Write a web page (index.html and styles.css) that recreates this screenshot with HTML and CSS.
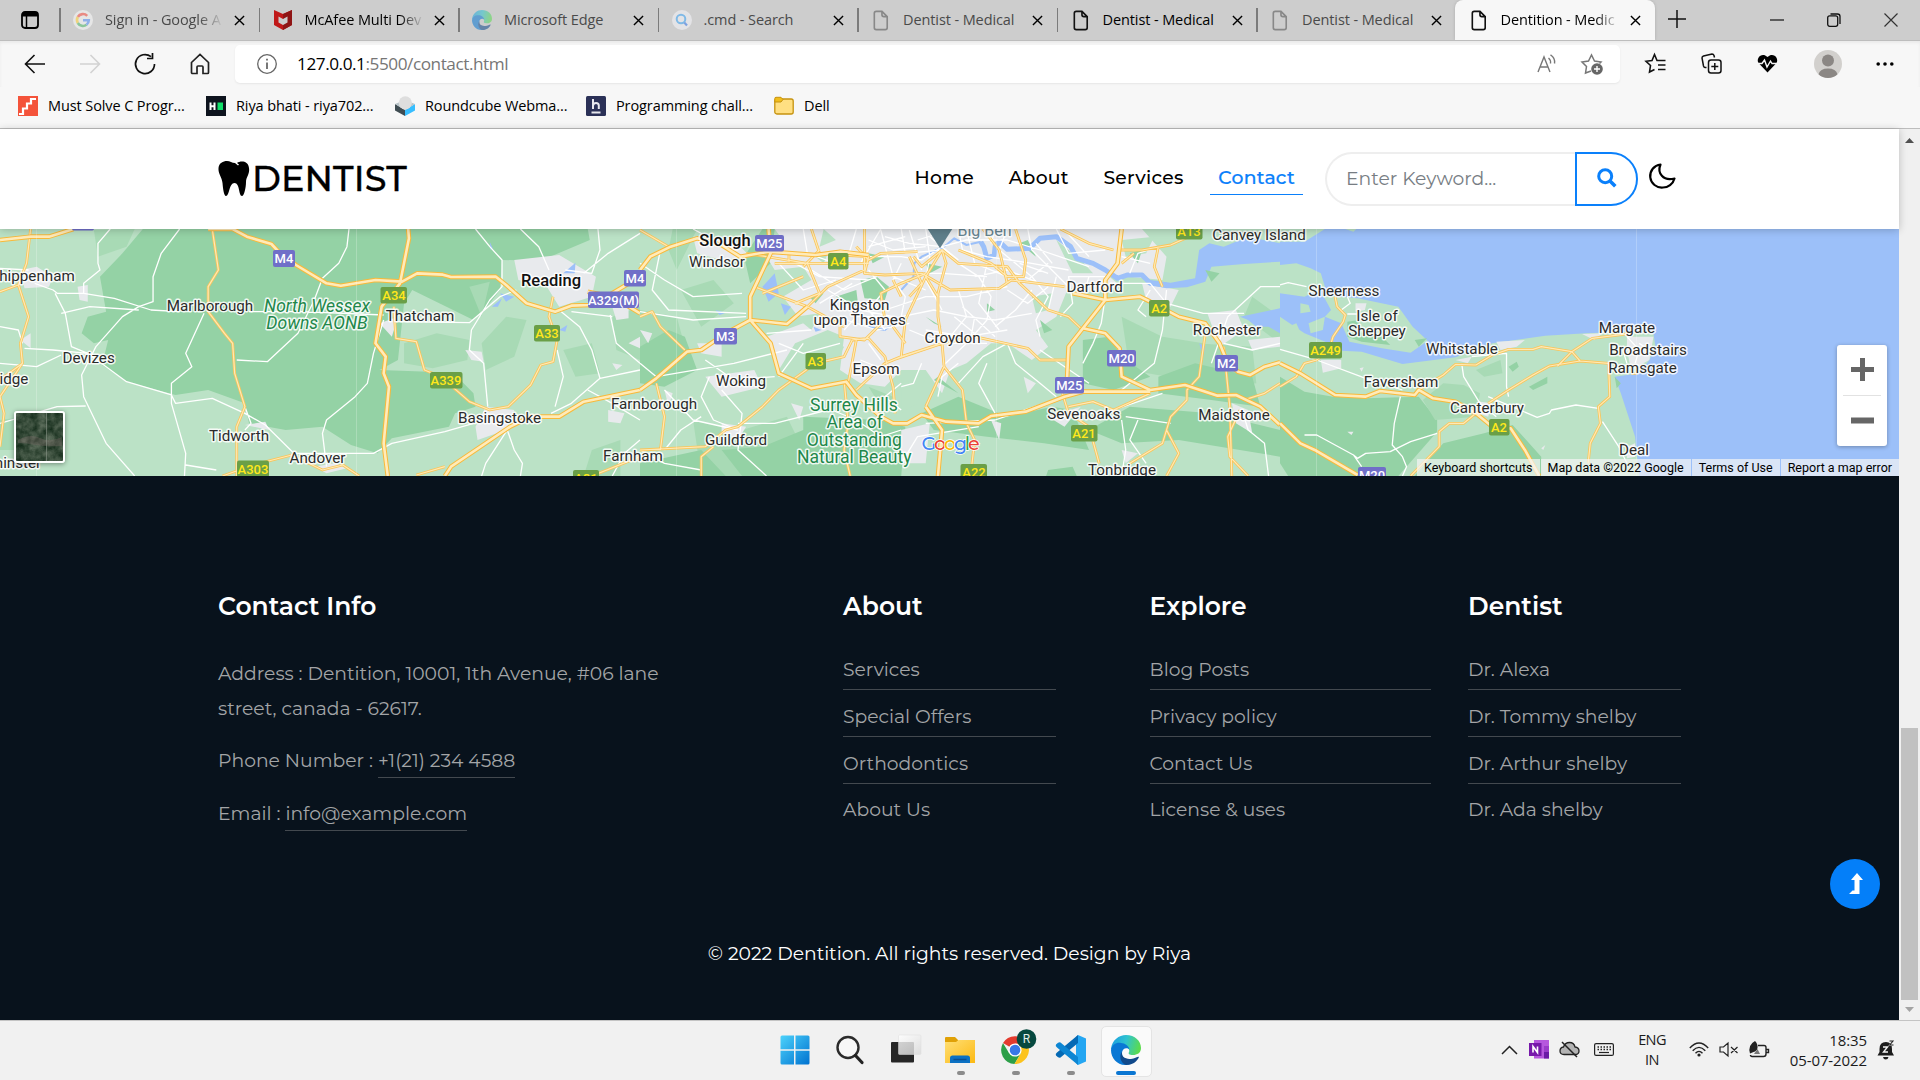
FILE: index.html
```html
<!DOCTYPE html>
<html lang="en">
<head>
<meta charset="utf-8">
<title>Dentition - Medical</title>
<link rel="stylesheet" href="styles.css">
</head>
<body>
<svg width="0" height="0" class="defs">
  <defs>
    <symbol id="page" viewBox="0 0 18 22"><path d="M2 3.500Q2 1.500 4 1.500H10L15.500 7V18.500Q15.500 20.500 13.500 20.500H4Q2 20.500 2 18.500ZM10 1.500V5Q10 7 12 7H15.500" fill="none" stroke="currentColor" stroke-width="1.700"/></symbol>
    <symbol id="x" viewBox="0 0 12 12"><path d="M1 1L11 11M11 1L1 11" fill="none" stroke="currentColor" stroke-width="1.500"/></symbol>
    <symbol id="edge" viewBox="0 0 30 30">
      <linearGradient id="eg" x1="0" x2="1" y1=".2" y2=".4"><stop offset="0" stop-color="#1b9de2"/><stop offset=".5" stop-color="#2fc3cf"/><stop offset="1" stop-color="#5bdb4e"/></linearGradient>
      <path d="M0 14C1 5 8 0 15 0C24 0 30 6 30 13C30 18 26 20 22 20C18 20 17 19 18 17C19 15 17 11 12 11C6 11 2 15 0 14Z" fill="url(#eg)"/>
      <path d="M0 15C1 9 6 7 10 8C14 8 18 11 18.500 14.500C16 12 11 13 11 18C11 24 17 29 22 27C19 30 16 30 14 30C6 30 0 23 0 15Z" fill="#0a78d4"/>
      <path d="M11 17C10 23 16 24 20 24C24 24 27 21 28 22C26 27 21 30 15 30C9 28 8 20 11 17Z" fill="#114a8b"/>
    </symbol>
  </defs>
</svg>

<div class="tabs">
  <div class="tabmenu"><svg width="18" height="18" viewBox="0 0 18 18"><rect x="1" y="1" width="16" height="16" rx="3" fill="none" stroke="#000" stroke-width="1.800"/><path d="M1 2H17V5.500H1Z"/><path d="M5.500 5V17" stroke="#000" stroke-width="1.500"/></svg></div>
  <div class="tab dim"><svg class="fav" viewBox="0 0 20 20"><circle cx="10" cy="10" r="10" fill="#e6e6e6"/><g fill="none" stroke-width="2.600"><path d="M14.200 5.800A6 6 0 0 0 4.800 7" stroke="#e98b84"/><path d="M4.800 7A6 6 0 0 0 4.800 13" stroke="#eed37c"/><path d="M4.800 13A6 6 0 0 0 13.500 14.800" stroke="#8cc69b"/><path d="M13.500 14.800A6 6 0 0 0 15.800 10.300H10" stroke="#8fb0ea"/></g></svg><span class="tt fade">Sign in - Google A</span><svg class="cl"><use href="#x"/></svg></div>
  <div class="tab"><svg class="fav" viewBox="0 0 20 20"><path d="M1 0L10 4L19 0V15L10 20L1 15Z" fill="#c01818"/><path d="M10 4L19 0V15L10 20Z" fill="#8f1515"/><path d="M5.500 6.500L10 9L14.500 6.500V12.500L10 15L5.500 12.500Z" fill="#cdcdcd"/></svg><span class="tt fade">McAfee Multi Dev</span><svg class="cl"><use href="#x"/></svg></div>
  <div class="tab dim"><svg class="fav half"><use href="#edge"/></svg><span class="tt">Microsoft Edge</span><svg class="cl"><use href="#x"/></svg></div>
  <div class="tab dim"><svg class="fav" viewBox="0 0 20 20"><circle cx="10" cy="10" r="10" fill="#e3e3e6"/><circle cx="9" cy="9" r="4.300" fill="none" stroke="#7fb9e6" stroke-width="2"/><path d="M12.300 12.500L15 15.500" stroke="#7da2e0" stroke-width="2.200"/></svg><span class="tt">.cmd - Search</span><svg class="cl"><use href="#x"/></svg></div>
  <div class="tab dim"><svg class="fav doc"><use href="#page"/></svg><span class="tt">Dentist - Medical</span><svg class="cl"><use href="#x"/></svg></div>
  <div class="tab"><svg class="fav doc"><use href="#page"/></svg><span class="tt">Dentist - Medical</span><svg class="cl"><use href="#x"/></svg></div>
  <div class="tab dim"><svg class="fav doc"><use href="#page"/></svg><span class="tt">Dentist - Medical</span><svg class="cl"><use href="#x"/></svg></div>
  <div class="tab active"><svg class="fav doc"><use href="#page"/></svg><span class="tt fade">Dentition - Medic</span><svg class="cl"><use href="#x"/></svg></div>
  <div class="plus"><svg width="18" height="18" viewBox="0 0 18 18"><path d="M9 0V18M0 9H18" stroke="#111" stroke-width="1.500"/></svg></div>
  <div class="wc">
    <span><svg width="14" height="14"><path d="M0 7H14" stroke="#111" stroke-width="1.200"/></svg></span>
    <span><svg width="14" height="14" fill="none" stroke="#111" stroke-width="1.300"><rect x=".7" y="2.800" width="10" height="10.500" rx="2"/><path d="M3.500 1H10.500Q13 1 13 3.500V11"/></svg></span>
    <span><svg width="14" height="14"><path d="M.5 .5L13.500 13.500M13.500 .5L.5 13.500" stroke="#333" stroke-width="1.200"/></svg></span>
  </div>
</div>

<div class="toolbar">
  <div class="nb"><svg width="22" height="20" viewBox="0 0 22 20" fill="none" stroke="#111" stroke-width="1.600"><path d="M21 10H1.500M10.500 1L1.500 10L10.500 19"/></svg></div>
  <div class="nb"><svg width="22" height="20" viewBox="0 0 22 20" fill="none" stroke="#d2d2d2" stroke-width="1.600"><path d="M1 10H20.500M11.500 1L20.500 10L11.500 19"/></svg></div>
  <div class="nb"><svg width="22" height="22" viewBox="0 0 22 22" fill="none" stroke="#111" stroke-width="1.700"><path d="M20.500 11A9.500 9.500 0 1 1 17 3.700M18.500 0V5.500H13"/></svg></div>
  <div class="nb"><svg width="20" height="22" viewBox="0 0 20 22" fill="none" stroke="#222" stroke-width="1.700"><path d="M1.500 9.500L10 1.500L18.500 9.500V19.500Q18.500 20.500 17.500 20.500H13V14Q13 13 12 13H8Q7 13 7 14V20.500H2.500Q1.500 20.500 1.500 19.500Z"/></svg></div>
  <div class="bar">
    <svg width="22" height="22" viewBox="0 0 22 22"><circle cx="11" cy="11" r="9.300" fill="none" stroke="#666" stroke-width="1.300"/><path d="M11 9.500V16M11 5.800V7.500" stroke="#555" stroke-width="1.600"/></svg>
    <span class="url"><b>127.0.0.1</b>:5500/contact.html</span>
    <svg class="read" width="20" height="20" viewBox="0 0 20 20" fill="none" stroke="#777" stroke-width="1.400"><path d="M1 18L7 3L13 18M3 13H11M11.500 4Q14 6 13.500 9.500M13.500 .8Q18.500 4 17.500 9.500"/></svg>
    <svg width="22" height="22" viewBox="0 0 22 22"><path d="M10 18L4.500 20L5.500 13.500L1 9L7.500 8L10.500 2L13.500 8L20 9L18.500 10.500" fill="none" stroke="#777" stroke-width="1.500"/><circle cx="16" cy="16" r="5.800" fill="#666"/><path d="M16 13V19M13 16H19" stroke="#fff" stroke-width="1.400"/></svg>
  </div>
  <div class="ab a1"><svg width="21" height="21" viewBox="0 0 21 21" fill="none" stroke="#111" stroke-width="1.600"><path d="M14 7.500H12L9.500 1.500L7 7.500L1 8.300L5.500 12.500L4.500 19L9.500 16.500M14 7.500H20.500M13 12H20.500M13 16.500H20.500"/></svg></div>
  <div class="ab"><svg width="21" height="21" viewBox="0 0 21 21" fill="none" stroke="#111" stroke-width="1.500"><path d="M5.500 14.500H4Q3 14.500 2.500 13L1 5Q1 3.500 2.500 3L11 1Q12.500 1 13 2.500L13.500 4.500"/><rect x="7.500" y="7" width="12.500" height="13" rx="2.500"/><path d="M13.800 10V17M10.300 13.500H17.300"/></svg></div>
  <div class="ab"><svg width="21" height="19" viewBox="0 0 21 19"><path d="M10.500 18.500L1.500 9C-1.500 4 5 -2.500 10.500 3C16 -2.500 22.500 4 19.500 9Z"/><path d="M0 9.500H5L7.500 6L10 13L13.500 7L15 9.500H21" fill="none" stroke="#f7f7f7" stroke-width="1.400"/></svg></div>
  <div class="ab av"><svg width="28" height="28" viewBox="0 0 28 28"><circle cx="14" cy="14" r="14" fill="#d2d0cd"/><circle cx="14" cy="10.500" r="6" fill="#8b8784"/><path d="M4.500 24.200Q6 18.500 14 18.500Q22 18.500 23.500 24.200A14 14 0 0 1 4.500 24.200Z" fill="#8b8784"/></svg></div>
  <div class="ab"><svg width="18" height="4"><circle cx="2.200" cy="2" r="1.800"/><circle cx="9" cy="2" r="1.800"/><circle cx="15.800" cy="2" r="1.800"/></svg></div>
</div>

<div class="marks">
  <div class="mk"><svg viewBox="0 0 20 20"><rect width="20" height="20" fill="#f4533a"/><path d="M1 18H5V12.500H9V7.500H13V3H18" fill="none" stroke="#fff" stroke-width="2.200"/></svg>Must Solve C Progr...</div>
  <div class="mk m2"><svg viewBox="0 0 20 20"><rect width="20" height="20" fill="#0e141e"/><rect x="11.500" y="6.500" width="5.500" height="7.500" fill="#12e06a"/><path d="M4.500 6.500V14M8.500 6.500V14M4.500 10.200H8.500" stroke="#fff" stroke-width="2"/></svg>Riya bhati - riya702...</div>
  <div class="mk m3"><svg viewBox="0 0 20 20"><path d="M0 8L10 14V20L0 14.500Z" fill="#3f4c52"/><path d="M20 8L10 14V20L20 14.500Z" fill="#37beff"/><path d="M0 8L10 14L20 8L10 4Z" fill="#b7c3c8"/><circle cx="10.300" cy="6.800" r="6.600" fill="#dedede"/></svg>Roundcube Webma...</div>
  <div class="mk m4"><svg viewBox="0 0 20 20"><rect width="20" height="20" rx="1.500" fill="#2b3157"/><path d="M7 3V13M7 9.500Q7.500 7 10 7Q12.800 7 12.800 9.500V13M5.500 16.500H14.500" fill="none" stroke="#e8e8ee" stroke-width="2"/></svg>Programming chall...</div>
  <div class="mk m5"><svg viewBox="0 0 20 20"><rect x=".8" y="3" width="18.400" height="15" rx="2" fill="#ffdf82" stroke="#c6930f" stroke-width="1.300"/><path d="M.8 6V2.500Q.8 1.300 2 1.300H7L9 3.500L7 6Z" fill="#f1bd1b" stroke="#c6930f"/></svg>Dell</div>
</div>

<div class="view">
  <div class="site">
    <header class="head">
      <a class="logo"><svg width="32" height="36" viewBox="0 0 32 36"><path d="M9 0C12 0 14 2 17 2L20 4.500L21 3.500L19 2C22 0 30 -1 31 7C32 13 28 16 28 21C28 27 26 35 24 35C20.500 35 22 22 16.500 22C11 22 11.500 35 8 35C6 35 5 28 4.500 22C4 16 0 13 .5 7C1 2 5 0 9 0Z"/></svg>DENTIST</a>
      <nav><a>Home</a><a>About</a><a>Services</a><a class="on">Contact</a></nav>
      <div class="search"><div class="inp">Enter Keyword...</div><div class="btn"><svg width="20" height="20" viewBox="0 0 20 20"><circle cx="8.200" cy="8.200" r="6.500" fill="none" stroke="#0a80fb" stroke-width="3"/><path d="M13 13L18.300 18.300" stroke="#0a80fb" stroke-width="3.600"/></svg></div></div>
      <svg class="moon" width="26" height="26" viewBox="0 0 26 26"><path d="M10.500 1.500C7 10 13 18.500 24.500 15.500C23 21 18 24.500 13 24.500A11.500 11.500 0 0 1 10.500 1.500Z" fill="none" stroke="#000" stroke-width="2.200" stroke-linejoin="round"/></svg>
    </header>

    <div class="map">
      <svg class="canvas" width="1899" height="247" viewBox="0 0 1899 247">
        <rect width="1899" height="247" fill="#bbe2c6"/>
        <!-- west: Wiltshire and Hampshire -->
        <g transform="translate(0,-99) scale(.40816,.33333)">
          <path class="g" d="M350 297H1440L1445 330L1325 392L1230 390L1225 480L1200 520L1160 570L1010 480L990 520L975 690L930 720L1050 725L1120 740L1160 790L1165 830L1115 850L1100 890L960 925L925 970L860 945L790 890L700 900L610 880L600 820L510 780L430 795L310 755L250 705L265 630L230 640L200 610L215 560L260 545L245 440L300 370Z"/>
          <path class="m" d="M0 870L60 860L140 900L60 960H0ZM990 640L1070 610L1150 630L1145 690L1060 715L990 700ZM1150 470L1200 455L1180 560ZM1180 640L1240 560L1290 570L1260 680L1190 720ZM1380 660L1450 640L1470 730L1410 740ZM1500 560L1568 530V690L1510 660ZM230 300L330 297L310 350L240 380ZM1450 960L1520 930V1038H1430Z"/>
          <path class="u" d="M50 420L90 410L130 440L120 470L60 475ZM190 470L215 465L215 515L195 510ZM50 630L75 610V655ZM1260 390L1370 375L1460 440L1450 500L1370 530L1340 470L1270 450ZM930 580L975 560L960 620ZM1140 660L1180 665L1185 695L1155 690ZM1190 830L1260 840L1240 900L1170 930L1165 890ZM1490 840L1530 850L1520 880L1490 875ZM1500 530L1540 520V565L1510 570ZM600 885L650 875L660 900ZM770 1010L820 1000L850 1015L800 1030ZM1500 700L1525 705L1510 720ZM1540 640L1568 620V655Z"/>
          <path class="w" d="M1380 430L1410 398L1408 430ZM1225 490L1260 500L1240 515ZM1205 530L1230 505L1220 530ZM1370 600L1390 585L1385 605ZM1200 335L1207 355L1202 360Z"/>
          <path class="wr" d="M270 297L240 340V400L245 420L205 460V490L140 490L130 480L85 460M0 415L70 420M440 297L395 370L375 440V515L340 530L300 560L235 650L200 735L205 800L260 940L330 1038M135 490L160 550L175 650L215 670L310 755L420 795L430 820L520 805L600 850L650 885L720 970M0 590L45 600L55 640M60 655L130 660L215 670M0 700L90 710L150 675M0 880L140 830L210 828M205 490L280 505L370 540L440 545M500 550L455 670L470 710L420 760V820L455 970L452 1038M455 1005L530 1020M610 545L740 545L940 555M965 575L1150 578L1225 500L1265 480M855 297L850 350L830 400L790 445L770 510L730 610L655 695L580 690M940 570L915 670L900 760L870 800L800 870L790 910L800 1010M720 970L915 970L960 940L1090 905L1190 870M1165 297L1200 350L1230 390V470L1200 510L1155 600L1150 660L1185 700L1195 830M1275 297L1320 350L1345 420M1465 297L1470 360L1450 430L1385 420M1568 310L1490 370L1430 430M1370 540L1420 590L1450 660L1470 745L1568 720M1365 660L1380 740L1360 830M1470 745L1400 820L1350 850M1240 890L1260 960L1280 1000L1275 1038M1240 905L1190 1000L1180 1038M1440 780L1500 820L1568 870M1568 930L1530 970L1500 1038M1400 545L1500 560M1495 555L1510 640L1568 700M150 550L220 530L340 540M600 830L615 880L600 900"/>
          <g class="a"><path id="wa" d="M75 297L65 400L45 465L70 560L50 640L55 700L0 800L10 850L0 950M45 465L0 485M55 700L0 750M520 297L535 420L510 470V545L550 610L570 640L575 730L600 830L580 890V1038M965 530L970 625L1020 635L1040 720L1080 740L1150 815L1200 840L1245 830L1300 765L1325 705L1355 695L1365 630L1345 560L1355 500M545 1038L620 1005L715 975L790 1020L840 1005L880 1038M1090 1010L1020 1035M1450 1038L1568 980"/></g>
          <use href="#wa" class="ai"/>
          <g class="b"><path id="wb" d="M0 330L75 320L120 320L180 297M510 297H570L605 320L665 342L690 375L725 405L800 460L835 467L920 450L985 455L1022 430L1085 434L1105 441L1215 440L1240 465L1290 520L1360 545L1400 527L1445 525L1500 490L1568 440M1000 297L1002 325L980 460L935 530L920 640L945 680L940 730L953 770L940 940L950 1038M1090 1038L1105 1010L1250 890L1300 860L1370 860L1430 815L1568 780M1440 485L1500 500L1568 550"/></g>
          <use href="#wb" class="bi"/>
        </g>
        <!-- centre: London and the M25 -->
        <g transform="translate(640,-99) scale(.40816,.33333)">
          <path class="m" d="M100 480L180 450L230 520L150 590ZM0 540L90 560L110 650L0 700ZM130 870L250 900L360 860L400 960L300 1038H150ZM560 770L620 800L600 850ZM1180 560L1280 620L1380 640V760L1200 720ZM1360 640L1500 650L1510 760L1400 780ZM1500 500L1568 560V640L1480 560ZM80 297L140 297L90 420L70 360Z"/>
          <path class="g" d="M0 650L70 600L110 620L140 720L60 770L0 760ZM300 950L400 900L400 860L590 870L650 890L640 1038H250L200 960ZM0 1038V1000L150 960L210 1038ZM690 850L780 800L900 860L1010 830L1060 840L1100 960L990 940L850 920L720 900ZM1085 630L1150 620L1180 680L1250 740L1160 780L1085 760ZM1270 740L1360 700L1500 740L1520 830L1400 810L1270 790ZM1200 830L1400 850L1568 900V980L1320 930L1180 940L1100 900ZM255 380L300 297H330L320 400L270 460ZM1000 1020L1060 1010L1070 1038H995Z"/>
          <path class="u" d="M330 297H1230L1290 380L1280 450L1200 440L1150 440L1180 470L1080 490L1050 470L1020 560L970 600L1000 650L960 690L900 640L860 640L800 700L760 720L740 790L700 720L640 720L600 770L540 760L490 720L500 620L460 600L380 640L340 720L310 620L400 580L350 500L420 450L400 410L330 420L310 380L350 330ZM130 320L230 330L270 380L200 390L140 370ZM140 640L200 640L200 680L150 670ZM160 740L280 720L300 770L200 800ZM200 880L260 890L240 930L200 910ZM370 820L400 830L390 870ZM640 900L710 880L700 1000L640 1000ZM1230 460L1320 480L1300 530L1240 510ZM1390 550L1460 540L1480 600L1420 650ZM1490 630L1568 620V650L1500 660ZM1450 820L1490 840L1500 910L1460 880ZM1000 860L1080 830L1040 890ZM1180 960L1220 970L1190 1000ZM60 780L80 790L70 830ZM940 740L970 760L950 790ZM0 600L30 610L20 640ZM860 870L885 880L880 930Z"/>
          <path class="base" d="M450 297L480 330L440 350ZM340 430L390 440L370 480ZM840 680L880 690L850 720ZM960 500L1010 490L1000 540L970 550ZM1020 330L1080 390L1110 430L1060 430ZM1180 330L1260 320L1240 370L1190 380ZM470 640L500 650L480 700ZM640 740L700 740L680 820L640 850ZM380 560L440 550L420 600ZM430 380L460 370L450 400Z"/>
          <path class="g" d="M540 450L580 440L610 470L600 510L550 505ZM480 500L530 480L535 530L500 520ZM700 560L740 590L720 580ZM700 400L740 410L710 430ZM850 520L870 540L850 545ZM930 340L950 330L970 380ZM1200 370L1230 360L1220 400ZM415 500L450 490L430 520ZM560 370L600 380L570 400ZM980 570L1010 600L990 610ZM730 740L780 790L720 750Z"/>
          <path class="w" d="M1370 360L1395 340L1430 350L1490 320L1568 340V395L1480 402L1400 410L1385 455L1340 472L1290 475L1250 465L1250 450L1300 458L1360 445ZM300 470L330 430L340 490L315 515ZM345 520L370 530L355 555ZM425 590L445 600L430 605ZM1470 560L1568 535V610L1540 590L1510 590L1490 570ZM1370 640L1385 650L1380 680ZM185 540L210 548L195 555Z"/>
          <path class="th" d="M1290 465L1250 460L1230 435L1195 435L1170 445L1140 420L1110 400L1070 385L1055 350L1020 320L980 325L955 355L900 358L880 335L870 350L868 375L850 385L842 350L835 335"/>
          <path class="th up" d="M835 335L800 345L770 325L745 350L690 380L672 400L670 440L640 480M640 560L600 600L560 590"/>
          <path class="g" d="M1385 420L1420 430L1400 455ZM1490 590L1510 600L1500 610Z"/>
          <path class="wr" d="M0 400L60 450L130 500L250 490M50 360L30 480L70 540L260 550M0 545L130 570L260 560M0 700L40 740L230 700L360 660M130 297L180 330L240 360M160 690L230 750L330 740M170 740L150 800L180 870L240 900M200 780L250 850L240 960L310 1038M240 900L130 870L60 780M240 880L330 880L460 840M150 860L100 900L60 960M340 640L400 670L490 640M310 610L420 600M400 640L340 740M640 760L600 800L640 840M640 1000L680 920L830 890M700 880L870 870L990 820M740 710L800 640L850 570L860 500L830 440L780 400L740 350M780 760L840 680L900 640M740 350L720 297M740 350L660 340L600 320M740 350L800 330L900 330L980 360L1100 410M740 350L690 390L640 380L560 380M700 297L710 380L700 450L740 540M640 297L650 370L740 360M560 330L620 360L700 350M780 297L790 360L850 380L960 400L1050 420M900 297L880 360L960 440L1000 500L970 570L980 620M820 440L900 420L980 460M780 480L800 560L760 620M650 430L740 430L850 440M640 560L720 540L800 560L870 570L960 550M870 590L920 540L960 480M770 560L830 620M790 530L870 620M640 400L620 450L650 500L640 560M560 420L600 480L560 540L600 600M460 480L540 540L620 560M380 400L440 440L560 450M400 297L410 370L480 400L560 400M340 400L400 480L480 450M500 420L530 297M540 400L590 297M1020 297L1050 370L1140 360M950 297L960 360L1050 470M1140 440L1050 440L1060 520L1030 560M1200 430L1220 370L1270 350M1150 460L1250 460L1290 520L1380 550L1480 550M1290 480L1280 600L1260 700L1180 780M1440 560L1400 700M1430 640L1500 660L1568 640M1250 480L1220 540L1240 560M1140 500L1130 580L1110 640L1085 700M980 660L1100 760M1050 860L1160 840L1280 790M1180 870L1190 960L1180 1038M1220 870L1200 930L1240 1000M1480 860L1490 900L1530 940L1540 1038M900 640L920 700L980 760L1020 800M1440 560L1520 470H1568M1300 880L1190 860M0 960L60 1000L150 1020M470 840L530 870L590 920L640 900M850 700L830 760L870 850M660 300L690 420M590 300L620 440L700 480M710 320L780 390M680 330L760 300M800 300L820 400L900 440M850 400L830 520L880 600M900 480L950 520L1000 470M700 600L800 620L900 600M660 600L740 640L850 640M600 540L700 500L800 500L900 470M1000 400L940 460M1020 440L1000 540M560 350L650 320M420 420L500 480L580 440M440 520L520 460M480 560L580 600L660 580M1040 300L1100 380M1180 380L1250 400M690 700L670 760L640 770M780 700L740 740L730 800M500 600L530 560L600 560M560 640L590 690M540 690L600 720M870 300L860 340M930 400L1000 430M970 340L1010 400M1100 440L1090 480M820 560L810 630"/>
          <g class="a"><path id="ca" d="M0 560L30 545L50 590L110 660M0 960L160 950L210 900L240 890L300 830L340 780L430 700L500 680L520 630L560 625L600 680L620 770L625 850M40 760L60 860L50 960M530 630L510 760M530 780L600 700L640 680L650 570L700 440L740 360M500 750L510 880L500 960L515 1038M150 1038L150 980L180 950M490 590L490 620L550 630L600 570L590 490L640 460L700 430M410 530L500 590M620 690L740 640L730 560L730 490L750 400L740 360M640 680L740 640L820 620L950 655L980 690L1045 690M740 640L745 710L700 830M745 710L790 780L800 880L820 930L810 1038M490 375L560 380L550 430L600 435L690 430L760 480L880 475L910 450L1040 470M740 360L780 400L900 410L930 460L1000 540L1050 560L1080 595M780 360L860 400L900 440L940 440L945 390L920 297M260 370L410 400L440 490L380 520M400 410L440 360M280 470L410 530L460 470L550 420L550 297M300 490L400 440M530 350L560 390L590 370L680 365M365 370V395M330 400H560M420 297L440 370M740 360L690 410L670 380M840 297L880 360L900 460M1170 360L1230 360L1300 345L1345 320M1270 350L1260 410L1280 470M1180 400L1210 370M1030 297L1100 340L1160 360M620 590L650 640M1385 610L1370 740L1340 780L1340 810L1300 860L1280 940L1200 1000M1430 650L1445 830L1450 1038M1290 900L1320 970L1290 1038M1470 840L1440 920L1445 980L1490 1038M1050 830L1110 815L1160 840L1250 790M1035 790L1050 850L1100 890L1125 1000M1480 810L1530 790L1568 760M0 300L70 350M660 380L690 460L660 500M700 440L730 500M620 450L640 500"/></g>
          <use href="#ca" class="ai"/>
          <g class="b"><path id="cb" d="M0 420L25 380L75 350L140 325L200 345L245 380L315 365L430 375L490 365L560 375M0 780L40 745L115 665L150 660L210 610L270 570L360 582L410 530M315 297L320 370L270 500V570L320 640L340 730L420 775L505 755L530 795L590 860L620 880L655 880L690 855L750 875L830 880L860 858L945 845L1040 800L1085 785L1250 785M700 830L740 900L730 1038M1180 297L1170 400L1140 450V510L1085 595L1050 650L1045 780M1085 595L1140 610L1175 655L1180 740L1250 780L1335 765L1415 797L1460 795L1520 830L1568 885M1060 490L1140 510L1225 500L1250 515L1320 560L1385 580L1420 640L1440 700L1465 725L1495 735L1530 710L1568 697"/></g>
          <use href="#cb" class="bi"/>
          <path d="M705 297H765L735 355Z" fill="#5f7f8b"/>
        </g>
        <!-- east: Kent coast -->
        <g transform="translate(1280,-99) scale(.40816,.33333)">
          <path class="w" d="M0 335L60 335L110 297H1568V1038H880L870 920L835 790L820 740L880 730L905 690L920 650L915 612L860 605L750 610L650 617L520 640L430 682L300 702L200 665L150 662L120 640L60 610L0 560Z"/>
          <path class="base" d="M0 405L40 400L75 415L100 430L110 470L60 500L0 490ZM105 495L190 505L290 530L325 590L362 632L320 668L250 655L170 635L150 580L110 560L125 540ZM160 297L180 305L187 297ZM50 520L70 525L75 545L50 550ZM0 600L40 580L55 620L0 640ZM70 580L110 560L105 600L75 610Z"/>
          <path class="g" d="M165 575L195 570L190 605L250 620L270 645L200 635L165 620ZM60 785L130 800L210 805L340 800L385 870L385 905L290 1038H20L0 1000V740ZM400 940L500 910L570 885L640 980V1038H330L370 980ZM560 710L580 695L585 710L570 725ZM610 770L655 740L655 760L620 780ZM330 630L360 625L340 650ZM820 740L835 760L825 775Z"/>
          <path class="m" d="M350 810L400 760L450 765L490 790L480 860L380 870ZM480 720L540 690L545 730L500 740Z"/>
          <path class="u" d="M100 690L150 690L150 715L105 728ZM185 520L212 520L208 540L185 545ZM530 635L600 630L580 650L540 660ZM740 612L790 610L770 630ZM430 690L470 680L460 700ZM850 620L915 620L905 690L860 720L850 660ZM490 815L520 820L510 860L485 850ZM640 955L650 945L645 960ZM195 715L205 712L200 725ZM850 950L870 940V980L850 985ZM165 905L180 905L175 915Z"/>
          <path class="wr" d="M0 465L20 458L65 470M165 500L172 520L150 540M165 552L190 552M0 658L90 690L210 745L300 780M445 700L450 740L490 820L530 860M470 680L555 670V770L560 800M510 800L630 862L660 850L665 840L725 825L780 835M790 875L830 950L850 1000M295 800L280 880L275 945L300 980L310 1010L300 1038M60 915H90L180 975L190 985L210 970L270 965L320 935L385 910M850 620L880 660L870 700M180 975L200 1010M850 700L840 660M880 640L905 660"/>
          <g class="a"><path id="ea" d="M135 500L140 530L160 555L155 575L130 620L120 660L90 690L60 700L40 740L0 770M340 780L400 735L430 703L480 705L520 675L560 658L620 658L640 650L715 665L765 625L860 610M715 665L735 693L805 700L808 800L780 830L785 880L760 940L755 1000M735 693L660 708L620 735L560 780L510 820M715 665L680 708M480 850L450 880L415 880L390 905L390 950L320 1038M860 730H875"/></g>
          <use href="#ea" class="ai"/>
          <g class="b"><path id="eb" d="M0 700L50 730L135 795L210 800L245 783L330 795L340 780L375 805L430 815L480 850L520 890L565 895L600 960L635 1038M0 880L50 940L85 960L190 1035"/></g>
          <use href="#eb" class="bi"/>
        </g>
        <path d="M36.500 0V247M356.500 0V247M676.500 0V247M996.500 0V247M1316.500 0V247M1636.500 0V247" stroke="#fff" stroke-opacity=".22"/>
        <g class="lb">
          <text x="37" y="52">hippenham</text>
          <text x="210" y="82">Marlborough</text><text x="420" y="92">Thatcham</text><text x="88.600" y="134">Devizes</text><text x="14" y="155">idge</text><text x="239" y="212">Tidworth</text><text x="317.500" y="234">Andover</text><text x="499.600" y="194">Basingstoke</text><text x="18" y="239">ninster</text><text x="654" y="180">Farnborough</text><text x="633" y="231.700">Farnham</text>
          <text x="717" y="38">Windsor</text><text x="859.600" y="80.700">Kingston</text><text x="859.600" y="95.700">upon Thames</text><text x="952.600" y="113.700">Croydon</text><text x="876" y="144.700">Epsom</text><text x="741" y="157">Woking</text><text x="736" y="216">Guildford</text><text x="1083.700" y="190">Sevenoaks</text><text x="1094.700" y="62.700">Dartford</text><text x="1227" y="105.700">Rochester</text><text x="1234" y="191">Maidstone</text><text x="1122" y="246">Tonbridge</text><text x="1259" y="11">Canvey Island</text>
          <text x="1344" y="67">Sheerness</text><text x="1377" y="91.700">Isle of</text><text x="1377" y="107">Sheppey</text><text x="1462" y="125">Whitstable</text><text x="1401" y="157.700">Faversham</text><text x="1487" y="184">Canterbury</text><text x="1627" y="104">Margate</text><text x="1648" y="126">Broadstairs</text><text x="1642.500" y="143.700">Ramsgate</text><text x="1634" y="226">Deal</text>
          <text x="551" y="57" class="big">Reading</text><text x="725" y="16.500" class="big">Slough</text>
          <text x="984.500" y="7.300" class="ben">Big Ben</text>
          <g class="park"><text class="it" x="317" y="82.500">North Wessex</text><text class="it" x="317" y="100">Downs AONB</text><text x="854" y="181.700">Surrey Hills</text><text x="854.700" y="199">Area of</text><text x="854.300" y="217">Outstanding</text><text x="854.300" y="234">Natural Beauty</text></g>
        </g>
        <g class="bm">
          <rect x="72" y="-15" width="22" height="16.500" rx="2"/>
          <rect x="273" y="21" width="22" height="17" rx="2"/><text x="284" y="34.300">M4</text>
          <rect x="588" y="62.500" width="51" height="16.500" rx="2"/><text x="613.500" y="75.700">A329(M)</text>
          <rect x="624" y="41" width="22" height="16.500" rx="2"/><text x="635" y="54">M4</text>
          <rect x="755" y="6" width="29" height="16.500" rx="2"/><text x="769.400" y="19.300">M25</text>
          <rect x="714" y="99" width="23" height="16.500" rx="2"/><text x="725.400" y="112.200">M3</text>
          <rect x="1107" y="121" width="29" height="16.500" rx="2"/><text x="1121.600" y="134">M20</text>
          <rect x="1215" y="126" width="23" height="16.500" rx="2"/><text x="1226.500" y="139.300">M2</text>
          <rect x="1055" y="148" width="29" height="16.500" rx="2"/><text x="1069.300" y="161">M25</text>
          <rect x="1358" y="238" width="28" height="16.500" rx="2"/><text x="1372" y="251">M20</text>
        </g>
        <g class="ba">
          <rect x="380.500" y="58" width="26.500" height="16.500" rx="2"/><text x="394" y="71">A34</text>
          <rect x="534" y="96" width="26" height="16.500" rx="2"/><text x="547" y="109">A33</text>
          <rect x="430" y="143" width="32.500" height="16.500" rx="2"/><text x="446" y="156">A339</text>
          <rect x="237" y="231.500" width="32" height="16.500" rx="2"/><text x="253" y="245">A303</text>
          <rect x="573" y="241" width="26" height="16.500" rx="2"/><text x="586" y="254">A31</text>
          <rect x="828" y="24" width="20.500" height="16.500" rx="2"/><text x="838.300" y="37">A4</text>
          <rect x="805.500" y="124" width="20.500" height="16.500" rx="2"/><text x="815.600" y="137">A3</text>
          <rect x="1176" y="-6" width="26.500" height="16.500" rx="2"/><text x="1189" y="7">A13</text>
          <rect x="1149" y="71" width="20.500" height="16.500" rx="2"/><text x="1159.200" y="84">A2</text>
          <rect x="1071" y="196" width="26.500" height="16.500" rx="2"/><text x="1084" y="209">A21</text>
          <rect x="960.500" y="235" width="26.500" height="16.500" rx="2"/><text x="974" y="248">A22</text>
          <rect x="1309" y="113" width="33" height="16.500" rx="2"/><text x="1325.600" y="126">A249</text>
          <rect x="1489" y="190" width="20.500" height="16.500" rx="2"/><text x="1499" y="203">A2</text>
        </g>
        <text class="goo" x="950.600" y="221" text-anchor="middle" textLength="58"><tspan fill="#4285f4">G</tspan><tspan fill="#ea4335">o</tspan><tspan fill="#fbbc05">o</tspan><tspan fill="#4285f4">g</tspan><tspan fill="#34a853">l</tspan><tspan fill="#ea4335">e</tspan></text>
      </svg>
      <div class="sat"><svg width="48" height="48" viewBox="0 0 48 48"><filter id="n" color-interpolation-filters="sRGB"><feTurbulence type="fractalNoise" baseFrequency=".13" numOctaves="4" seed="4"/><feColorMatrix values=".4 0 0 0 .02 .36 0 0 0 .12 .36 0 0 0 .05 0 0 0 0 1"/></filter><rect width="48" height="48" filter="url(#n)"/><path d="M2 27Q14 20 24 25T46 24V33Q30 34 20 32T2 30Z" fill="#8b7474" opacity=".3"/><path d="M30.500 0V48" stroke="#8d988c" stroke-opacity=".6"/></svg></div>
      <div class="zoom"><span><svg width="23" height="23"><path d="M11.500 0V23M0 11.500H23" stroke="#666" stroke-width="5"/></svg></span><i></i><span><svg width="23" height="23"><path d="M0 11.500H23" stroke="#666" stroke-width="6"/></svg></span></div>
      <div class="attr"><span>Keyboard shortcuts</span><span>Map data ©2022 Google</span><span>Terms of Use</span><span>Report a map error</span></div>
    </div>

    <footer class="foot">
      <div class="cols">
        <section><h2>Contact Info</h2>
          <p class="first">Address : Dentition, 10001, 1th Avenue, #06 lane<br>street, canada - 62617.</p>
          <p>Phone Number : <a>+1(21) 234 4588</a></p>
          <p>Email : <a>info@example.com</a></p></section>
        <section><h2>About</h2><ul class="w1"><li>Services</li><li>Special Offers</li><li>Orthodontics</li><li>About Us</li></ul></section>
        <section><h2>Explore</h2><ul class="w2"><li>Blog Posts</li><li>Privacy policy</li><li>Contact Us</li><li>License &amp; uses</li></ul></section>
        <section><h2>Dentist</h2><ul class="w1"><li>Dr. Alexa</li><li>Dr. Tommy shelby</li><li>Dr. Arthur shelby</li><li>Dr. Ada shelby</li></ul></section>
      </div>
      <div class="copy">© 2022 Dentition. All rights reserved. Design by Riya</div>
    </footer>
    <div class="top"><svg width="14" height="22" viewBox="0 0 14 22"><path d="M0 21L3.500 17.500H5.500V7H2L8 0L14 7H10.500V21Z" fill="#fff"/></svg></div>
  </div>
  <div class="scroll"><svg width="9" height="5"><path d="M0 5L4.500 0L9 5Z" fill="#505050"/></svg><div class="thumb"></div><svg width="9" height="5"><path d="M0 0H9L4.500 5Z" fill="#a3a3a3"/></svg></div>
</div>

<div class="task">
  <div class="ic"><svg width="30" height="30" viewBox="0 0 30 30"><linearGradient id="wg" x1="0" y1="0" x2="1" y2="1"><stop offset="0" stop-color="#4cd2fb"/><stop offset="1" stop-color="#0072d0"/></linearGradient><path d="M.5 2Q.5 .5 2 .5H14V14.200H.5ZM15.500 .5H28Q29.500 .5 29.500 2V14.200H15.500ZM.5 15.700H14V29.500H2Q.5 29.500 .5 28ZM15.500 15.700H29.500V28Q29.500 29.500 28 29.500H15.500Z" fill="url(#wg)"/></svg></div>
  <div class="ic"><svg width="28" height="30" viewBox="0 0 28 30"><circle cx="12" cy="12.500" r="10.500" fill="#f7f7f7" stroke="#2b2b2b" stroke-width="2.400"/><path d="M19.500 20.500L26 27.500" stroke="#222" stroke-width="3.200" stroke-linecap="round"/></svg></div>
  <div class="ic"><svg width="30" height="30" viewBox="-1 1 30 30"><linearGradient id="tg" x2=".8" y2="1"><stop offset="0" stop-color="#fff"/><stop offset="1" stop-color="#dcdcdc"/></linearGradient><rect y="8" width="23" height="20.500" rx="1" fill="#262626"/><rect x="7.500" y="1" width="22.500" height="19.500" rx="1" fill="url(#tg)" fill-opacity=".82" stroke="#ddd" stroke-width=".5"/></svg></div>
  <div class="ic"><svg width="30" height="30" viewBox="0 0 30 30"><linearGradient id="fg" x2="1" y2="1"><stop offset="0" stop-color="#ffdf75"/><stop offset="1" stop-color="#fcb912"/></linearGradient><path d="M0 3Q0 2 1 2H10L13 5V9H0Z" fill="#e0a106"/><path d="M0 7H11L13.500 5H30V28H0Z" fill="url(#fg)"/><path d="M5 28V23Q5 20.500 7.500 20.500H22.500Q25 20.500 25 23V28Z" fill="#0c71c3"/><path d="M8.500 24.500H21.500" stroke="#0a4f92" stroke-width="1.500"/></svg><b></b></div>
  <div class="ic chr"><svg width="42" height="36" viewBox="-21 -21 42 36"><g><path d="M0 0L-12 -7A14 14 0 0 1 12.500 -6.200H0Z" fill="#e33b2e"/><path d="M-12 -7A14 14 0 0 0 -.5 14L6 3L-6 3Z" fill="#2c9f48"/><path d="M12.500 -6.200A14 14 0 0 1 -.5 14L6 3L3 -6.200Z" fill="#fcc31e"/><circle r="6.600" fill="#fff"/><circle r="5.300" fill="#3878e8"/></g><circle cx="11.500" cy="-11" r="9.800" fill="#06493f"/><text x="11.500" y="-7" text-anchor="middle" class="r">R</text></svg><b></b></div>
  <div class="ic"><svg width="30" height="30" viewBox="0 0 30 30"><path d="M22 0L30 3.500V26.500L22 30L20 28V2Z" fill="#24a6f2"/><path d="M22 0V8L4.500 22.500Q3 23.500 0 20.500Q-1 19 1 17.500Z" fill="#0569b4"/><path d="M22 30V22L4.500 7.500Q3 6.500 0 9.500Q-1 11 1 12.500Z" fill="#0d86d3"/></svg><b></b></div>
  <div class="ic sel"><svg width="30" height="30"><use href="#edge"/></svg><b></b></div>
  <div class="tray">
    <span class="t30"><svg width="17" height="10"><path d="M1 9L8.500 1.500L16 9" fill="none" stroke="#222" stroke-width="1.500"/></svg></span>
    <span class="t30"><svg width="20" height="19"><rect x="5" width="15" height="18.500" fill="#b657dd"/><path d="M15 6H20V12H15Z" fill="#9a3bc9"/><path d="M15 12H20V18.500H15Z" fill="#6b1aa5"/><rect y="3" width="12.500" height="13" fill="#7719aa"/><path d="M4 12.500V6.500L8.500 12.500V6.500" fill="none" stroke="#fff" stroke-width="1.600"/></svg></span>
    <span class="t30"><svg width="21" height="17"><path d="M5 13.500Q1 13.500 1 10Q1 6.500 4.500 6Q6 1.500 10.500 1.500Q15 1.500 16 6Q20 6.500 20 10Q20 13.500 16 13.500Z" fill="#b3b3b3" stroke="#222" stroke-width="1.300"/><path d="M3 1L18 16" stroke="#222" stroke-width="1.500"/></svg></span>
    <span class="t40"><svg width="20" height="13"><rect x=".6" y=".6" width="18.800" height="11.800" rx="1.500" fill="none" stroke="#222" stroke-width="1.200"/><path d="M3.500 4H17M3.500 6.500H17" stroke="#222" stroke-width="1.300" stroke-dasharray="1.500 1.500"/><path d="M5 9.500H15" stroke="#222" stroke-width="1.200"/></svg></span>
    <span class="t56">ENG<br>IN</span>
    <span class="t30 g4"><svg width="20" height="15" fill="none" stroke="#222" stroke-width="1.400"><path d="M.8 6Q10 -4 19.200 6M3.700 8.800Q10 2 16.300 8.800M6.500 11.300Q10 7.500 13.500 11.300"/><circle cx="10" cy="13" r="1.600" fill="#222" stroke="none"/></svg></span>
    <span class="t30"><svg width="20" height="15" fill="none" stroke="#222" stroke-width="1.200"><path d="M1 5H4.500L9 1V14L4.500 10H1ZM12 5L18.500 11M18.500 5L12 11"/></svg></span>
    <span class="t30"><svg width="21" height="17"><path d="M9 4.500H15Q17 4.500 17 6.500V13Q17 15.500 14.500 15.500H3Q1.500 15.500 1.500 14M17.500 8.500H19.500V11.500H17.500" fill="none" stroke="#222" stroke-width="1.400"/><path d="M6 0Q9 3 8.500 7Q8 10 4.500 11L1 12.500Q-1.500 4 6 0Z" fill="#222"/><path d="M8.500 8L11 13H5Z" fill="#777"/></svg></span>
    <span class="clock">18:35<br>05-07-2022</span>
    <span class="bell"><svg width="18" height="20" viewBox="0 0 18 20"><path d="M2.500 9Q2.500 2 9 2Q15 2 15 9V12L17 15.500H.5L2.500 12ZM6 17H11.500Q11 19.500 8.700 19.500Q6.500 19.500 6 17Z" fill="#1c1c1c"/><path d="M6 7H10.500L6.500 12H11M12.500 1H16L12.700 5H16.500" fill="none" stroke="#f3f3f3" stroke-width="1.400"/><path d="M12.500 1H16L12.700 5H16.500" fill="none" stroke="#222" stroke-width="1.100"/></svg></span>
  </div>
</div>
</body>
</html>
```
FILE: styles.css
```css
* { box-sizing: border-box; }
body { margin: 0; width: 1920px; height: 1080px; overflow: hidden; background: #f7f7f7; font-family: "Segoe UI", "Open Sans", sans-serif; font-size: 14.5px; letter-spacing: -.1px; color: #000; }
.defs { position: absolute; }
svg { display: block; flex: none; overflow: visible; }

/* tab strip */
.tabs { display: flex; height: 40px; background: #cdcdcd; }
.tabmenu { width: 59px; display: flex; align-items: center; padding-left: 21px; }
.tab { width: 199.500px; height: 40px; display: flex; align-items: center; padding: 0 0 0 14px; position: relative; }
.tab::before { content: ""; position: absolute; left: 0; top: 8px; width: 1.500px; height: 24px; background: #7b7b7b; }
.tab.dim { color: #4a4a4a; }
.fav { width: 20px; height: 20px; }
.doc { width: 18px; height: 21px; margin: 0 1px; color: #111; }
.dim .doc { color: #888; }
.half { opacity: .55; }
.tt { width: 122px; margin-left: 12px; white-space: nowrap; line-height: 24px; }
.fade { width: 121px; margin-right: 1px; -webkit-mask: linear-gradient(90deg, #000 78%, transparent 98%); mask: linear-gradient(90deg, #000 78%, transparent 98%); }
.cl { width: 11px; height: 11px; margin-left: 7px; color: #000; }
.tab.active { width: 200px; margin-left: -1px; background: #f7f7f7; border-radius: 8px 8px 0 0; box-shadow: 0 0 3px #aaa; clip-path: inset(0 -4px 0 -4px); }
.tab.active::before { display: none; }
.plus { width: 44px; display: flex; align-items: center; justify-content: center; padding-bottom: 2px; }
.wc { margin-left: auto; margin-right: 1px; display: flex; padding-bottom: 1px; }
.wc span { width: 57px; display: flex; align-items: center; justify-content: center; }

/* toolbar */
.toolbar { display: flex; align-items: center; height: 47px; padding: 0 0 1px 7px; border-top: 1px solid #bdbdbd; box-shadow: inset 0 2px 3px #eaeaea; }
.nb { width: 55px; display: flex; justify-content: center; }
.bar { width: 1385px; height: 38px; margin-left: 8px; background: #fff; border-radius: 5px; display: flex; align-items: center; padding: 0 17px 0 21px; box-shadow: 0 1px 2px #e6e6e6; }
.url { margin-left: 19px; font-size: 17.200px; letter-spacing: -.45px; color: #767676; flex: 1; }
.url b { font-weight: 400; color: #000; }
.read { margin-right: 24px; }
.ab { width: 56px; display: flex; justify-content: center; }
.a1 { margin-left: 7px; }
.av { margin: 0 1px 0 5px; }

/* bookmarks */
.marks { display: flex; align-items: center; height: 42px; padding: 0 0 4px 18px; border-bottom: 1px solid #bdbdbd; }
.mk { display: flex; align-items: center; gap: 10px; width: 188px; white-space: nowrap; }
.mk svg { width: 20px; height: 20px; }
.m2 { width: 189px; }
.m3 { width: 191px; }
.m4 { width: 188px; }

/* page */
.view { display: flex; height: 891px; }
.site { width: 1899px; position: relative; font-family: Montserrat, Inter, sans-serif; font-size: 18.750px; letter-spacing: 0; }
.head { height: 100px; background: #fff; display: flex; align-items: center; padding-left: 218px; position: relative; z-index: 2; box-shadow: 0 1px 8px rgba(0,0,0,.22); }
.logo { display: flex; align-items: center; gap: 2px; width: 688.500px; padding-bottom: 1px; font-size: 35px; font-weight: 500; letter-spacing: .1px; -webkit-text-stroke: .3px #000; }
nav { display: flex; gap: 18.700px; font-weight: 500; letter-spacing: .25px; padding-top: 2px; }
nav a { padding: 0 8px 3px; line-height: 26px; border-bottom: 1px solid transparent; }
nav .on { color: #0a80fb; border-color: #0a80fb; -webkit-text-stroke: .2px #0a80fb; }
.search { display: flex; width: 313px; height: 54px; margin-left: auto; }
.inp { width: 250px; border: 2px solid #eee; border-right: 0; border-radius: 27px 0 0 27px; padding-left: 19px; line-height: 50px; color: #777d83; }
.btn { width: 63px; border: 2px solid #0a80fb; border-radius: 0 27px 27px 0; display: flex; align-items: center; justify-content: center; padding-bottom: 2px; }
.moon { margin: -6px 223px 0 12px; }

/* map */
.map { height: 247px; position: relative; overflow: hidden; }
.g { fill: #94d2a5; }
.m { fill: #a8dab5; }
.u { fill: #e8eaed; }
.w { fill: #9cc0f9; }
.base { fill: #bbe2c6; }
.canvas path { vector-effect: non-scaling-stroke; stroke-linejoin: round; }
.th { fill: none; stroke: #9cc0f9; stroke-width: 5; }
.up { stroke-width: 2; }
.wr, .a, .ai, .b, .bi { fill: none; }
.wr { stroke: #fff; stroke-width: 1.300; }
.a { stroke: #f9c55a; stroke-width: 2.800; }
.ai { stroke: #ffe9b5; stroke-width: 1.200; }
.b { stroke: #f9b93a; stroke-width: 4.600; }
.bi { stroke: #ffebb9; stroke-width: 2.600; }
.lb text { font: 15.200px Roboto, sans-serif; letter-spacing: 0; text-anchor: middle; fill: #2b2b2b; stroke: #fff; stroke-opacity: .85; stroke-width: 3px; paint-order: stroke; stroke-linejoin: round; }
.lb .big { font-size: 16.500px; font-weight: 500; fill: #111; }
.lb .ben { font-size: 16px; fill: #668490; }
.lb .park text { font-size: 17.500px; fill: #21874a; }
.lb .park .it { font-style: italic; }
.bm rect { fill: #706fc8; }
.ba rect { fill: #6a9f47; }
.bm text, .ba text { font: 500 13px Roboto, sans-serif; letter-spacing: 0; text-anchor: middle; fill: #fff; }
.ba text { fill: #ffe81c; }
.goo { font: 500 19px Montserrat, sans-serif; letter-spacing: 0; stroke: #fff; stroke-width: 1.500px; paint-order: stroke; }
.sat { position: absolute; left: 14px; top: 182px; width: 51px; height: 52px; border: 2px solid #fff; border-radius: 3px; overflow: hidden; box-shadow: 0 1px 5px rgba(0,0,0,.4); }
.zoom { position: absolute; left: 1837px; top: 116px; width: 50px; height: 101px; background: #fff; border-radius: 3px; display: flex; flex-direction: column; align-items: center; box-shadow: 0 1px 4px rgba(0,0,0,.3); }
.zoom span { flex: 1; display: flex; align-items: center; padding-bottom: 1px; }
.zoom i { width: 38px; height: 1px; background: #e2e2e2; }
.attr { position: absolute; right: 0; bottom: 0; height: 17px; display: flex; gap: 1px; font: 12.500px/18px Roboto, sans-serif; letter-spacing: 0; color: #000; white-space: nowrap; }
.attr span { background: rgba(245,245,245,.7); padding: 0 7px; }

/* footer */
.foot { height: 544px; background: #08121c; padding: 115px 0 0 218px; color: #a3a5a7; }
.cols { display: grid; grid-template-columns: 625px 306.500px 318.500px 213px; height: 348px; }
h2 { margin: 0; font-size: 25px; font-weight: 600; line-height: 30px; color: #fff; }
p { margin: 0 0 18px; line-height: 35px; }
.first { margin-top: 35px; margin-bottom: 16.800px; }
p a { padding-bottom: 5.500px; border-bottom: 1px solid #43494f; }
ul { list-style: none; margin: 33.500px 0 0; padding: 0; }
.w1 { width: 213px; }
.w2 { width: 281px; }
li { line-height: 30px; padding-bottom: 4px; border-bottom: 1px solid #43494f; margin-bottom: 12px; }
li:last-child { border: 0; margin-top: -1px; }
.copy { margin-left: -218px; text-align: center; color: #fff; line-height: 30px; }
.top { position: absolute; left: 1830px; top: 730px; width: 50px; height: 50px; border-radius: 50%; background: #047ff9; display: flex; align-items: center; justify-content: center; }
.top svg { margin-left: 1px; }
.scroll { width: 21px; background: #f0f0f0; display: flex; flex-direction: column; align-items: center; padding: 9px 0 8px; }
.thumb { width: 17px; height: 272px; margin: auto 0 7px; background: #c1c1c1; }

/* taskbar */
.task { height: 60px; border-top: 1px solid #c4c4c4; background: #f1f1f1; display: flex; align-items: center; padding: 0 15px 0 767.500px; }
.ic { width: 55.100px; height: 59px; display: flex; align-items: center; justify-content: center; position: relative; padding-bottom: 1px; }
.chr { padding-bottom: 7px; }
.ic b { position: absolute; left: 24px; bottom: 5px; width: 8px; height: 4px; border-radius: 2px; background: #8b8b8b; }
.sel::before { content: ""; position: absolute; left: 3px; top: 5px; width: 49px; height: 49px; border-radius: 5px; background: #fafafa; border: 1px solid #e4e4e4; }
.sel svg { position: relative; }
.sel b { left: 18px; width: 20px; background: #0a76d2; }
.r { font: 12px Roboto, sans-serif; fill: #e2efe9; letter-spacing: 0; }
.tray { margin-left: auto; display: flex; align-items: center; line-height: 20px; color: #1b1b1b; padding-bottom: 2px; }
.tray span { display: flex; justify-content: center; }
.t30 { width: 30px; }
.t40 { width: 40px; }
.tray .t56, .tray .clock { display: block; text-align: center; }
.t56 { width: 56px; letter-spacing: -.6px; }
.g4 { margin-left: 4px; }
.tray .clock { width: 93px; text-align: right; font-size: 15px; }
.bell { width: 38px; }
```
